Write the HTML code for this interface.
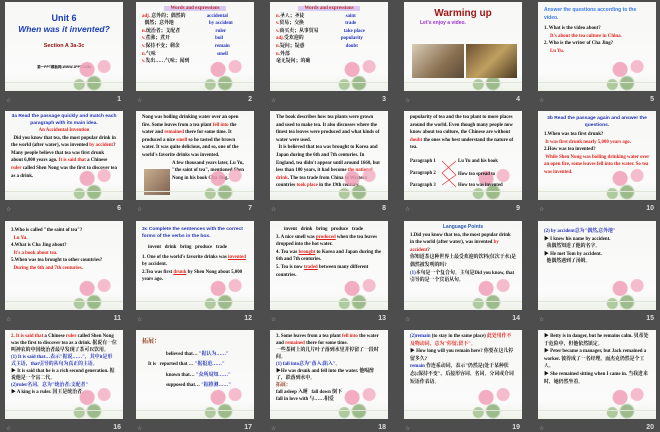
<!DOCTYPE html><html><head><meta charset="utf-8"><style>
*{margin:0;padding:0;box-sizing:border-box}
body{width:660px;height:432px;background:#4d4d4d;position:relative;overflow:hidden;font-family:"Liberation Serif","Noto Serif CJK SC",serif}
.s{position:absolute;width:118px;height:89px;background:linear-gradient(180deg,#f7f7f5 0%,#fbfbfb 80%,#eef2ea 100%);overflow:hidden;font-size:4.9px;line-height:7.6px;color:#111;padding:3px 6px;font-weight:bold}
.s:after{content:"";position:absolute;left:0;right:0;bottom:8px;height:1px;background:#dfe6d8}
.fl{position:absolute;width:46px;height:36px;right:6px;bottom:0px;background:radial-gradient(circle at 35% 40%,#f09ab5 0,#f09ab5 7px,transparent 8px),radial-gradient(circle at 72% 32%,#f3adc2 0,#f3adc2 6px,transparent 7px),radial-gradient(circle at 50% 78%,#88ad72 0,#88ad72 6px,transparent 8px),radial-gradient(circle at 18% 82%,#a0c08c 0,#a0c08c 5px,transparent 6px);opacity:.8}
.n{position:absolute;color:#ddd;font:bold 7px "Liberation Sans",sans-serif;width:20px;text-align:right}
.ic{position:absolute;color:#aaa;font:6px "Liberation Sans",sans-serif}
.r{color:#e0231c}.b{color:#2233bb}.bl{color:#3a7ce8}
p{margin:0}
</style></head><body>
<div class="s" style="left:5px;top:2px;text-align:center;font-family:'Liberation Sans',sans-serif"><div class="fl"></div>
<p style="color:#1a3fb8;font-size:9px;line-height:12px;margin-top:7px;font-weight:bold">Unit 6</p>
<p style="color:#1a3fb8;font-size:8.5px;line-height:10px;font-style:italic;font-weight:bold">When was it invented?</p>
<p style="color:#8b1010;font-size:5.5px;margin-top:9px;font-weight:bold">Section A 3a-3c</p>
<p style="font-size:3.5px;margin-top:13px">第一PPT模板网-WWW.1PPT.COM</p></div>
<div class="s" style="left:136px;top:2px"><div class="fl"></div>
<p style="text-align:center"><span style="background:#d9c8f0;color:#c03030;padding:0 6px;font-weight:bold;font-size:5px">Words and expressions</span></p>
<p><span class="r">adj.</span> 意外的；偶然的 <span class="b" style="margin-left:20px">accidental</span></p>
<p>&nbsp;&nbsp;偶然；意外地 <span class="b" style="margin-left:34px">by accident</span></p>
<p><span class="r">n.</span>统治者；支配者 <span class="b" style="margin-left:34px">ruler</span></p>
<p><span class="r">v.</span>煮沸；煮开 <span class="b" style="margin-left:44px">boil</span></p>
<p><span class="r">v.</span>保持不变；剩余 <span class="b" style="margin-left:34px">remain</span></p>
<p><span class="r">n.</span>气味 <span class="b" style="margin-left:60px">smell</span></p>
<p><span class="r">v.</span>发出……气味；闻到</p></div>
<div class="s" style="left:270px;top:2px"><div class="fl"></div>
<p style="text-align:center"><span style="background:#d9c8f0;color:#c03030;padding:0 6px;font-weight:bold;font-size:5px">Words and expressions</span></p>
<p><span class="r">n.</span>圣人；圣徒 <span class="b" style="margin-left:40px">saint</span></p>
<p><span class="r">v.</span>贸易；交换 <span class="b" style="margin-left:40px">trade</span></p>
<p><span class="r">v.</span>商买卖；从事贸易 <span class="b" style="margin-left:24px">take place</span></p>
<p><span class="r">adj.</span>受欢迎的 <span class="b" style="margin-left:36px">popularity</span></p>
<p><span class="r">n.</span>疑问；疑惑 <span class="b" style="margin-left:40px">doubt</span></p>
<p><span class="r">n.</span>外部</p><p>毫无疑问；的确</p></div>
<div class="s" style="left:404px;top:2px;font-family:'Liberation Sans',sans-serif"><div class="fl"></div>
<p style="text-align:center;color:#a01818;font-size:10px;line-height:13px;font-weight:bold;margin-top:2px">Warming up</p>
<p style="color:#a030d0;font-size:5px;margin-left:10px">Let's enjoy a video.</p>
<div style="position:absolute;left:8px;top:42px;width:52px;height:34px;background:linear-gradient(135deg,#d8cdb8,#8a7050 60%,#5a4a38)"></div>
<div style="position:absolute;left:62px;top:42px;width:51px;height:34px;background:linear-gradient(135deg,#6a5030,#c0a060 50%,#4a3a20)"></div></div>
<div class="s" style="left:538px;top:2px"><div class="fl"></div>
<p class="bl" style="font-family:'Liberation Sans',sans-serif;font-size:5px;margin-top:2px;font-weight:bold">Answer the questions according to the video.</p>
<p style="font-weight:bold;margin-top:3px">1. What is the video about?</p>
<p class="r" style="font-weight:bold;margin-left:6px">It's about the tea culture in China.</p>
<p style="font-weight:bold">2. Who is the writer of Cha Jing?</p>
<p class="r" style="font-weight:bold;margin-left:6px">Lu Yu.</p></div>
<div class="s" style="left:5px;top:111px"><div class="fl"></div>
<p class="b" style="font-family:'Liberation Sans',sans-serif;text-align:center;line-height:6.5px">3a Read the passage quickly and match each paragraph with its main idea.</p>
<p class="r" style="text-align:center">An Accidental Invention</p>
<p>&nbsp;&nbsp;Did you know that tea, the most popular drink in the world (after water), was invented <span class="r">by accident</span>? Many people believe that tea was first drunk about 6,000 years ago. <span class="r">It is said that</span> a Chinese <span class="r">ruler</span> called Shen Nong was the first to discover tea as a drink.</p></div>
<div class="s" style="left:136px;top:111px"><div class="fl"></div>
<p>Nong was boiling drinking water over an open fire. Some leaves from a tea plant <span class="r">fell into</span> the water and <span class="r">remained</span> there for some time. It produced a nice <span class="r">smell</span> so he tasted the brown water. It was quite delicious, and so, one of the world's favorite drinks was invented.</p>
<div style="position:absolute;left:8px;top:58px;width:26px;height:26px;background:linear-gradient(135deg,#c8b090,#806050)"></div>
<p style="margin-left:30px">A few thousand years later, Lu Yu, "the saint of tea", mentioned Shen Nong in his book Cha Jing.</p></div>
<div class="s" style="left:270px;top:111px"><div class="fl"></div>
<p>The book describes how tea plants were grown and used to make tea. It also discusses where the finest tea leaves were produced and what kinds of water were used.</p>
<p>&nbsp;&nbsp;It is believed that tea was brought to Korea and Japan during the 6th and 7th centuries. In England, tea didn't appear until around 1660, but less than 100 years, it had become <span class="r">the national drink</span>. The tea trade from China to Western countries <span class="r">took place</span> in the 19th century.</p></div>
<div class="s" style="left:404px;top:111px"><div class="fl"></div>
<p>popularity of tea and the tea plant to more places around the world. Even though many people now know about tea culture, the Chinese are without <span class="r">doubt</span> the ones who best understand the nature of tea.</p>
<svg style="position:absolute;left:0;top:44px" width="118" height="36"><g stroke="#e03030" stroke-width=".7" fill="none"><path d="M38 6L52 20M38 18L52 6M38 18L52 32M38 30L52 20"/></g>
<g font-size="4.8" font-weight="bold" font-family="Liberation Serif" fill="#111"><text x="6" y="7">Paragraph 1</text><text x="6" y="19">Paragraph 2</text><text x="6" y="31">Paragraph 3</text><text x="54" y="7">Lu Yu and his book</text><text x="54" y="20">How tea spread to</text><text x="54" y="31">How tea was invented</text></g></svg></div>
<div class="s" style="left:538px;top:111px"><div class="fl"></div>
<p class="b" style="font-family:'Liberation Sans',sans-serif;text-align:center;margin-top:2px;line-height:6.5px">3b Read the passage again and answer the questions.</p>
<p style="margin-top:2px">1.When was tea first drunk?</p>
<p class="r">&nbsp;It was first drunk nearly 5,000 years ago.</p>
<p>2.How was tea invented?</p>
<p class="r">&nbsp;While Shen Nong was boiling drinking water over an open fire, some leaves fell into the water. So tea was invented.</p></div>
<div class="s" style="left:5px;top:221px"><div class="fl"></div>
<p style="margin-top:3px">3.Who is called "the saint of tea"?</p><p class="r">&nbsp;&nbsp;Lu Yu.</p>
<p>4.What is Cha Jing about?</p><p class="r">&nbsp;&nbsp;It's a book about tea.</p>
<p>5.When was tea brought to other countries?</p><p class="r">&nbsp;&nbsp;During the 6th and 7th centuries.</p></div>
<div class="s" style="left:136px;top:221px"><div class="fl"></div>
<p class="b" style="font-family:'Liberation Sans',sans-serif;margin-top:3px;line-height:6.5px">3c Complete the sentences with the correct forms of the verbs in the box.</p>
<p style="margin:4px 0 2px 6px">invent &nbsp; drink &nbsp; bring &nbsp; produce &nbsp; trade</p>
<p>1. One of the world's favorite drinks was <span class="r"><u>invented</u></span> by accident.</p>
<p>2.Tea was first <span class="r"><u>drunk</u></span> by Shen Nong about 5,000 years ago.</p></div>
<div class="s" style="left:270px;top:221px"><div class="fl"></div>
<p style="margin:2px 0 0 8px">invent &nbsp; drink &nbsp; bring &nbsp; produce &nbsp; trade</p>
<p>3. A nice smell was <span class="r"><u>produced</u></span> when the tea leaves dropped into the hot water.</p>
<p>4. Tea was <span class="r"><u>brought</u></span> to Korea and Japan during the 6th and 7th centuries.</p>
<p>5. Tea is now <span class="r"><u>traded</u></span> between many different countries.</p></div>
<div class="s" style="left:404px;top:221px"><div class="fl"></div>
<p style="text-align:center;color:#2a5ab0;font-family:'Liberation Sans',sans-serif;font-weight:bold;font-size:5px">Language Points</p>
<p>1.Did you know that tea, the most popular drink in the world (after water), was invented <span class="r">by accident</span>?</p>
<p>你知道茶这种世界上最受欢迎的饮料(仅次于水)是偶然被发明的吗?</p>
<p><span class="b">(1)</span>本句是一个复合句。主句是Did you know, that引导的是一个宾语从句。</p></div>
<div class="s" style="left:538px;top:221px"><div class="fl"></div>
<p class="b" style="margin-top:4px">(2) by accident意为"偶然,意外地"</p>
<p>▶ I knew his name by accident.</p><p>&nbsp;&nbsp;我偶然知道了他的名字。</p>
<p>▶ He met Tom by accident.</p><p>&nbsp;&nbsp;他偶然遇到了汤姆。</p></div>
<div class="s" style="left:5px;top:330px;line-height:7px"><div class="fl"></div>
<p><span class="r">2. It is said that</span> a Chinese <span class="r">ruler</span> called Shen Nong was the first to discover tea as a drink. 据说有一位叫神农的中国统治者最早发现了茶可以饮用。</p>
<p class="b">(1) It is said that…表示"据说……"，其中it是形式主语，that引导的从句为真正的主语。</p>
<p>▶ It is said that he is a rich second generation. 据说他是一个富二代。</p>
<p class="b">(2)ruler名词，意为"统治者;支配者"</p><p>▶ A king is a ruler. 国王是统治者。</p></div>
<div class="s" style="left:136px;top:330px"><div class="fl"></div>
<p style="color:#8a3010;font-size:6px;margin:6px 0 4px;font-weight:bold">拓展：</p>
<p style="margin-left:24px">believed that… <span class="b">"据认为……"</span></p>
<p style="margin:3px 0 0 6px">It is &nbsp; reported that … <span class="b">"据报道……"</span></p>
<p style="margin:3px 0 0 24px">known that… <span class="b">"众所周知……"</span></p>
<p style="margin:3px 0 0 24px">supposed that… <span class="b">"据推测……"</span></p></div>
<div class="s" style="left:270px;top:330px;line-height:7px"><div class="fl"></div>
<p>3. Some leaves from a tea plant <span class="r">fell into</span> the water and <span class="r">remained</span> there for some time.</p>
<p>一些茶树上的几片叶子落到水里并停留了一段时间。</p>
<p class="b">(1) fall into意为"落入;陷入"。</p>
<p>▶He was drunk and fell into the water. 他喝醉了，跌落到水中。</p>
<p style="color:#8a3010;font-weight:bold">拓展：</p>
<p>fall asleep 入睡 &nbsp; fall down 倒下</p><p>fall in love with 与……相爱</p></div>
<div class="s" style="left:404px;top:330px"><div class="fl"></div>
<p><span class="b">(2)remain</span> (to stay in the same place) <span class="r">此处用作不及物动词，意为"停留;留下"。</span></p>
<p>▶ How long will you remain here? 你要在这儿停留多久?</p>
<p><span class="b">remain</span> 作连系动词，表示"仍然是(处于某种状态);保持不变"，后接形容词、名词、分词或介词短语作表语。</p></div>
<div class="s" style="left:538px;top:330px"><div class="fl"></div>
<p>▶ Betty is in danger, but he remains calm. 贝蒂处于危险中，但他依然镇定。</p>
<p>▶ Peter became a manager, but Jack remained a worker. 彼得成了一名经理，而杰克仍然是个工人。</p>
<p>▶ She remained sitting when I came in. 当我进来时，她仍然坐着。</p></div>
<div id="lab"></div>
<script>
var xs=[5,136,270,404,538],ys=[92,201,311,420],h='';
for(var r=0;r<4;r++)for(var c=0;c<5;c++){var n=r*5+c+1,t=ys[r]+5;
h+='<div class="ic" style="left:'+(xs[c]+1)+'px;top:'+t+'px">☆</div><div class="n" style="left:'+(xs[c]+96)+'px;top:'+(t-1)+'px">'+n+'</div>';}
document.getElementById('lab').innerHTML=h;
</script>
</body></html>
